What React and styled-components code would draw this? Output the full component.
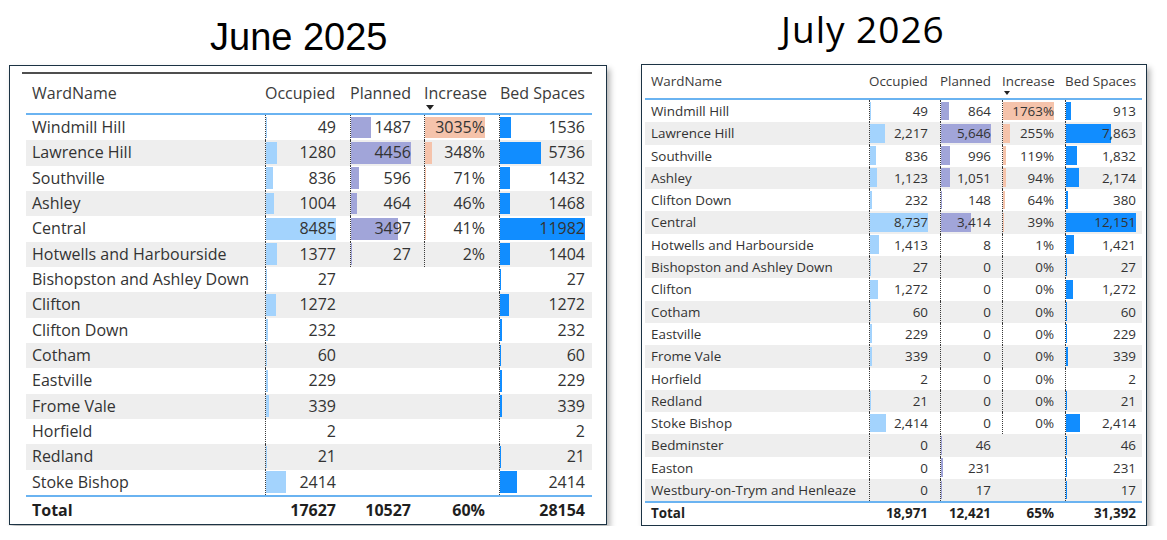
import React from "react";
import styled, { createGlobalStyle } from "styled-components";

const GlobalStyle = createGlobalStyle`
  body {
    margin: 0;
    background: #ffffff;
    font-family: "Open Sans", "Noto Sans", sans-serif;
  }
`;

const june = {
  title: "June 2025",
  rows: [
    ["Windmill Hill", 49, 1487, 3035, 1536],
    ["Lawrence Hill", 1280, 4456, 348, 5736],
    ["Southville", 836, 596, 71, 1432],
    ["Ashley", 1004, 464, 46, 1468],
    ["Central", 8485, 3497, 41, 11982],
    ["Hotwells and Harbourside", 1377, 27, 2, 1404],
    ["Bishopston and Ashley Down", 27, null, null, 27],
    ["Clifton", 1272, null, null, 1272],
    ["Clifton Down", 232, null, null, 232],
    ["Cotham", 60, null, null, 60],
    ["Eastville", 229, null, null, 229],
    ["Frome Vale", 339, null, null, 339],
    ["Horfield", 2, null, null, 2],
    ["Redland", 21, null, null, 21],
    ["Stoke Bishop", 2414, null, null, 2414],
  ],
  total: [17627, 10527, 60, 28154],
};

const july = {
  title: "July 2026",
  rows: [
    ["Windmill Hill", 49, 864, 1763, 913],
    ["Lawrence Hill", 2217, 5646, 255, 7863],
    ["Southville", 836, 996, 119, 1832],
    ["Ashley", 1123, 1051, 94, 2174],
    ["Clifton Down", 232, 148, 64, 380],
    ["Central", 8737, 3414, 39, 12151],
    ["Hotwells and Harbourside", 1413, 8, 1, 1421],
    ["Bishopston and Ashley Down", 27, 0, 0, 27],
    ["Clifton", 1272, 0, 0, 1272],
    ["Cotham", 60, 0, 0, 60],
    ["Eastville", 229, 0, 0, 229],
    ["Frome Vale", 339, 0, 0, 339],
    ["Horfield", 2, 0, 0, 2],
    ["Redland", 21, 0, 0, 21],
    ["Stoke Bishop", 2414, 0, 0, 2414],
    ["Bedminster", 0, 46, null, 46],
    ["Easton", 0, 231, null, 231],
    ["Westbury-on-Trym and Henleaze", 0, 17, null, 17],
  ],
  total: [18971, 12421, 65, 31392],
};

// per-table layout: column widths, right padding of value cells, sizes
const juneLayout = {
  cols: [239, 85, 74, 75, 93],
  pads: [14, 13, 14, 7],
  rowH: 25.35,
  headH: 39,
  totalH: 27,
  font: 16,
  comma: false,
  arrow: { w: 8, h: 5, top: 31 },
};

const julyLayout = {
  cols: [224, 71, 62, 63, 77],
  pads: [12, 11, 11, 6],
  rowH: 22.3,
  headH: 33,
  totalH: 21.6,
  font: 13.4,
  comma: true,
  arrow: { w: 7, h: 4, top: 26 },
};

const barColors = ["#a3d3fd", "#a1a5d9", "#f5c3ab", "#118dff"];
const headers = ["Occupied", "Planned", "Increase", "Bed Spaces"];

const Page = styled.div`
  display: flex;
  gap: 34px;
  padding-left: 9px;
`;

const Panel = styled.div`
  display: flex;
  flex-direction: column;
`;

const Title = styled.div`
  box-sizing: border-box;
  height: ${(p) => p.$height}px;
  padding-top: ${(p) => p.$top}px;
  padding-left: ${(p) => p.$left}px;
  font-family: ${(p) => p.$family};
  font-size: ${(p) => p.$size}px;
  line-height: ${(p) => p.$size}px;
  letter-spacing: ${(p) => p.$spacing || 0}px;
  color: #000;
`;

const Card = styled.div`
  width: ${(p) => p.$width}px;
  border: 1px solid #1c3344;
  box-sizing: border-box;
  padding-top: ${(p) => p.$padTop}px;
  background: #fff;
  box-shadow: 3px 4px 6px rgba(0, 0, 0, 0.3);
`;

const TopRule = styled.div`
  height: 2px;
  margin: 0 14px 0 12px;
  background: #4f4f4f;
`;

const Table = styled.div`
  margin-left: ${(p) => p.$left}px;
  width: ${(p) => p.$cols.reduce((a, b) => a + b, 0)}px;
  font-size: ${(p) => p.$font}px;
  color: #333333;
`;

const Row = styled.div`
  display: grid;
  grid-template-columns: ${(p) => p.$cols.map((c) => c + "px").join(" ")};
  height: ${(p) => p.$h}px;
  line-height: ${(p) => p.$h}px;
  background: ${(p) => (p.$striped ? "#eeeeee" : "transparent")};
  white-space: nowrap;
`;

const HeadRow = styled(Row)`
  border-bottom: 2px solid #6ab3f1;
  color: #3b3b3b;
`;

const TotalRow = styled(Row)`
  border-top: 2px solid #6ab3f1;
  font-weight: 700;
  color: #1f1f1f;
`;

const NameCell = styled.div`
  padding-left: 6px;
  overflow: hidden;
`;

const ValueCell = styled.div`
  position: relative;
  text-align: right;
  padding-right: ${(p) => p.$pad}px;
  border-left: 1px dotted ${(p) => (p.$axis ? "#3a3a3a" : "transparent")};
`;

const Bar = styled.div`
  position: absolute;
  left: 0;
  top: 1.5px;
  bottom: 2px;
  background: ${(p) => p.$color};
`;

const Value = styled.span`
  position: relative;
`;

const HeadCell = styled.div`
  position: relative;
  text-align: right;
  padding-right: ${(p) => p.$pad}px;
`;

const SortArrow = styled.div`
  position: absolute;
  left: 2px;
  top: ${(p) => p.$top}px;
  width: 0;
  height: 0;
  border-left: ${(p) => p.$w / 2}px solid transparent;
  border-right: ${(p) => p.$w / 2}px solid transparent;
  border-top: ${(p) => p.$h}px solid #222;
`;

const fmt = (v, comma) => (comma ? v.toLocaleString("en-US") : String(v));

const WardTable = ({ data, layout, left, topRule }) => {
  const { cols, pads, rowH, headH, totalH, font, comma, arrow } = layout;
  const maxes = [1, 2, 3, 4].map((i) =>
    Math.max(...data.rows.map((r) => r[i] || 0))
  );

  return (
    <>
      {topRule && <TopRule />}
      <Table $left={left} $cols={cols} $font={font}>
        <HeadRow $cols={cols} $h={headH}>
          <NameCell>WardName</NameCell>
          {headers.map((h, i) => (
            <HeadCell key={h} $pad={pads[i] + (i < 2 ? 2 : 0)}>
              {h}
              {h === "Increase" && (
                <SortArrow $w={arrow.w} $h={arrow.h} $top={arrow.top} />
              )}
            </HeadCell>
          ))}
        </HeadRow>
        {data.rows.map((r, ri) => (
          <Row key={r[0]} $cols={cols} $h={rowH} $striped={ri % 2 === 1}>
            <NameCell>{r[0]}</NameCell>
            {[1, 2, 3, 4].map((i) => {
              const v = r[i];
              const has = v !== null;
              const inner = cols[i] - pads[i - 1] - 1;
              return (
                <ValueCell key={i} $pad={pads[i - 1]} $axis={has}>
                  {has && v > 0 && (
                    <Bar
                      $color={barColors[i - 1]}
                      style={{ width: (v / maxes[i - 1]) * inner + "px" }}
                    />
                  )}
                  {has && (
                    <Value>{i === 3 ? v + "%" : fmt(v, comma)}</Value>
                  )}
                </ValueCell>
              );
            })}
          </Row>
        ))}
        <TotalRow $cols={cols} $h={totalH}>
          <NameCell>Total</NameCell>
          {data.total.map((v, i) => (
            <ValueCell key={i} $pad={pads[i]}>
              <Value>{i === 2 ? v + "%" : fmt(v, comma)}</Value>
            </ValueCell>
          ))}
        </TotalRow>
      </Table>
    </>
  );
};

export default function App() {
  return (
    <>
      <GlobalStyle />
      <Page>
        <Panel>
          <Title
            $height={65}
            $top={18}
            $left={201}
            $size={38}
            $family={`"Liberation Sans", Arial, sans-serif`}
          >
            {june.title}
          </Title>
          <Card $width={598} $padTop={6}>
            <WardTable data={june} layout={juneLayout} left={16} topRule />
          </Card>
        </Panel>
        <Panel>
          <Title
            $height={64}
            $top={10}
            $left={140}
            $size={37}
            $spacing={1}
            $family={`"Open Sans", "Noto Sans", sans-serif`}
          >
            {july.title}
          </Title>
          <Card $width={506} $padTop={0}>
            <WardTable data={july} layout={julyLayout} left={3} />
          </Card>
        </Panel>
      </Page>
    </>
  );
}
